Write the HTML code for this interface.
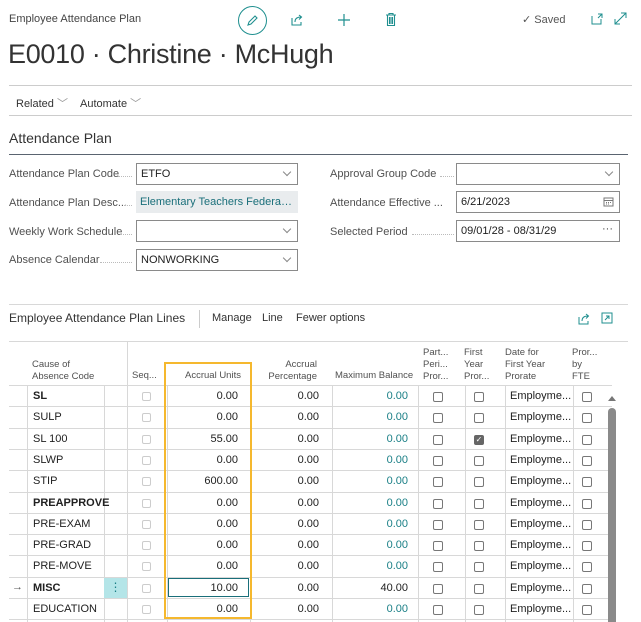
<!DOCTYPE html>
<html><head><meta charset="utf-8"><style>
*{box-sizing:border-box;margin:0;padding:0}
body{width:641px;height:622px;overflow:hidden;background:#fff;font-family:"Liberation Sans",sans-serif;color:#212121;position:relative;font-size:11px}
.a{position:absolute;white-space:nowrap}
.lbl{color:#505050;font-size:11px}
.dots{position:absolute;border-bottom:1px dotted #bbb;height:1px}
.inp{position:absolute;border:1px solid #8a8a8a;background:#fff;height:22px;font-size:11px;padding:4px 4px;color:#212121;white-space:nowrap;overflow:hidden;text-overflow:ellipsis}
.chev{position:absolute;right:7px;top:5px;width:6px;height:6px;border-right:1px solid #888;border-bottom:1px solid #888;transform:rotate(45deg)}
.hl{position:absolute;height:1px;background:#d8d8d8}
.vl{position:absolute;width:1px;background:#d8d8d8}
.cb{position:absolute;width:10px;height:10px;border:1px solid #777;border-radius:2px}
.cbd{position:absolute;width:9px;height:9px;border:1px solid #ccc;border-radius:2px}
.num{position:absolute;text-align:right;font-size:11px}
.th{position:absolute;font-size:9.5px;color:#505050;line-height:12px}
</style></head><body>
<div class="a" style="left:9px;top:13px;font-size:11px;color:#444">Employee Attendance Plan</div>
<div class="a" style="left:238px;top:6px;width:29px;height:29px;border:1px solid #1f8f8f;border-radius:50%"></div>
<svg class="a" style="left:245px;top:13px" width="15" height="15" viewBox="0 0 15 15"><path d="M3 12 L4 9 L10 3 L12 5 L6 11 Z" fill="none" stroke="#1f8f8f" stroke-width="1.1"/></svg>
<svg class="a" style="left:290px;top:13px" width="14" height="14" viewBox="0 0 14 14"><path d="M2 5 V12 H11 V9 M5 9 C5 5 8 4 11 4 M9 2 L11.5 4 L9 6.5" fill="none" stroke="#1f8f8f" stroke-width="1.1"/></svg>
<svg class="a" style="left:337px;top:13px" width="14" height="14"><path d="M7 1V13M1 7H13" stroke="#1f8f8f" stroke-width="1.2"/></svg>
<svg class="a" style="left:384px;top:12px" width="14" height="15"><path d="M2 3H12M5 3V1.5H9V3M3.5 3V13.5H10.5V3M5.5 5V12M7 5V12M8.5 5V12" fill="none" stroke="#1f8f8f" stroke-width="1.1"/></svg>
<div class="a" style="left:522px;top:13px;color:#555;font-size:11px">✓ Saved</div>
<svg class="a" style="left:591px;top:13px" width="12" height="12"><path d="M1 3V11H10V6M7 1H11V5M11 1L7 5" fill="none" stroke="#1f8f8f" stroke-width="1"/></svg>
<svg class="a" style="left:614px;top:12px" width="13" height="13"><path d="M1 12L12 1M7 1H12V6M1 7V12H6" fill="none" stroke="#1f8f8f" stroke-width="1"/></svg>
<div class="a" style="left:8px;top:39px;font-size:27px;color:#333;letter-spacing:-0.3px">E0010 · Christine · McHugh</div>
<div class="hl" style="left:9px;top:85px;width:623px;background:#ccc"></div>
<div class="a" style="left:16px;top:95px;font-size:11px;color:#333">Related <span style="color:#999">﹀</span></div>
<div class="a" style="left:80px;top:95px;font-size:11px;color:#333">Automate <span style="color:#999">﹀</span></div>
<div class="hl" style="left:9px;top:115px;width:623px;background:#ccc"></div>
<div class="a" style="left:9px;top:130px;font-size:14px;color:#333">Attendance Plan</div>
<div class="hl" style="left:9px;top:154px;width:619px;background:#5a6470"></div>

<div class="a lbl" style="left:9px;top:168px">Attendance Plan Code</div><div class="dots" style="left:118px;width:14px;top:176px"></div>
<div class="inp" style="left:136px;top:163px;width:162px">ETFO<div class="chev"></div></div>
<div class="a lbl" style="left:9px;top:197px">Attendance Plan Desc...</div><div class="dots" style="left:124px;width:8px;top:205px"></div>
<div class="inp" style="left:136px;top:191px;width:162px;border:none;background:#e9ecee;color:#1a6f7a;padding-top:5px">Elementary Teachers Federation...</div>
<div class="a lbl" style="left:9px;top:226px">Weekly Work Schedule</div><div class="dots" style="left:120px;width:12px;top:234px"></div>
<div class="inp" style="left:136px;top:220px;width:162px"><div class="chev"></div></div>
<div class="a lbl" style="left:9px;top:254px">Absence Calendar</div><div class="dots" style="left:100px;width:32px;top:262px"></div>
<div class="inp" style="left:136px;top:249px;width:162px">NONWORKING<div class="chev"></div></div>

<div class="a lbl" style="left:330px;top:168px">Approval Group Code</div><div class="dots" style="left:440px;width:14px;top:176px"></div>
<div class="inp" style="left:456px;top:163px;width:164px"><div class="chev"></div></div>
<div class="a lbl" style="left:330px;top:197px">Attendance Effective ...</div>
<div class="inp" style="left:456px;top:191px;width:164px">6/21/2023<svg style="position:absolute;right:5px;top:4px" width="11" height="11"><rect x="1" y="2" width="9" height="8" fill="none" stroke="#777"/><path d="M1 4.5H10M3 6.5h1M5 6.5h1M7 6.5h1M3 8h1M5 8h1" stroke="#777"/></svg></div>
<div class="a lbl" style="left:330px;top:226px">Selected Period</div><div class="dots" style="left:412px;width:42px;top:234px"></div>
<div class="inp" style="left:456px;top:220px;width:164px">09/01/28 - 08/31/29<span style="position:absolute;right:6px;top:2px;color:#444">···</span></div>

<div class="hl" style="left:9px;top:304px;width:619px"></div>
<div class="a" style="left:9px;top:311px;font-size:12px;color:#333">Employee Attendance Plan Lines</div>
<div class="vl" style="left:199px;top:310px;height:18px;background:#ccc"></div>
<div class="a" style="left:212px;top:312px;font-size:11px;color:#333">Manage</div>
<div class="a" style="left:262px;top:312px;font-size:11px;color:#333">Line</div>
<div class="a" style="left:296px;top:312px;font-size:11px;color:#333">Fewer options</div>
<svg class="a" style="left:577px;top:312px" width="13" height="13"><path d="M2 5V12H11V9M5 9C5 5 8 4 11 4M9 2L11.5 4L9 6.5" fill="none" stroke="#1f8f8f" stroke-width="1"/></svg>
<svg class="a" style="left:601px;top:312px" width="12" height="12"><path d="M1 1H11V11H1Z M5 4H8V7M8 4L4 8" fill="none" stroke="#1f8f8f" stroke-width="1"/></svg>
<div class="hl" style="left:9px;top:341px;width:619px"></div>

<div class="th" style="left:32px;top:359px">Cause of<br>Absence Code</div>
<div class="th" style="left:132px;top:370px">Seq...</div>
<div class="th" style="left:185px;top:370px">Accrual Units</div>
<div class="th" style="left:260px;top:359px;width:57px;text-align:right">Accrual<br>Percentage</div>
<div class="th" style="left:335px;top:370px">Maximum Balance</div>
<div class="th" style="left:423px;top:347px">Part...<br>Peri...<br>Pror...</div>
<div class="th" style="left:464px;top:347px">First<br>Year<br>Pror...</div>
<div class="th" style="left:505px;top:347px">Date for<br>First Year<br>Prorate</div>
<div class="th" style="left:572px;top:347px">Pror...<br>by<br>FTE</div>
<div class="vl" style="left:127px;top:341px;height:281px"></div>

<div id="rows"></div>
<script>
var rows=[["SL",1,"0.00","0.00",0],["SULP",0,"0.00","0.00",0],["SL 100",0,"55.00","0.00",1],["SLWP",0,"0.00","0.00",0],["STIP",0,"600.00","0.00",0],["PREAPPROVE",1,"0.00","0.00",0],["PRE-EXAM",0,"0.00","0.00",0],["PRE-GRAD",0,"0.00","0.00",0],["PRE-MOVE",0,"0.00","0.00",0],["MISC",1,"10.00","40.00",0],["EDUCATION",0,"0.00","0.00",0]];
var h="";var top0=385,rh=21.3;
h+='<div class="hl" style="left:9px;top:385px;width:603px"></div>';
[27,104,167,250,332,418,465,505,573].forEach(function(x){h+='<div class="vl" style="left:'+x+'px;top:385px;height:237px"></div>'});
rows.forEach(function(r,i){var t=Math.round(top0+rh*i);var b=Math.round(top0+rh*(i+1));
var c=(t+b)/2+1;
h+='<div class="hl" style="left:9px;top:'+b+'px;width:603px"></div>';
h+='<div class="a" style="left:33px;top:'+(c-7)+'px;font-size:11px;'+(r[1]?'font-weight:bold;':'')+'">'+r[0]+'</div>';
h+='<div class="cbd" style="left:142px;top:'+(c-5)+'px"></div>';
h+='<div class="num" style="left:170px;width:68px;top:'+(c-7)+'px">'+r[2]+'</div>';
h+='<div class="num" style="left:252px;width:67px;top:'+(c-7)+'px">0.00</div>';
h+='<div class="num" style="left:334px;width:74px;top:'+(c-7)+'px;color:'+(r[3]=="40.00"?"#212121":"#1a7f86")+'">'+r[3]+'</div>';
h+='<div class="cb" style="left:433px;top:'+(c-5)+'px"></div>';
h+=r[4]?'<div class="cb" style="left:474px;top:'+(c-5)+'px;background:#666;border-color:#666;color:#fff;font-size:8px;line-height:8px;text-align:center">✓</div>':'<div class="cb" style="left:474px;top:'+(c-5)+'px"></div>';
h+='<div class="a" style="left:510px;top:'+(c-7)+'px;font-size:11px">Employme...</div>';
h+='<div class="cb" style="left:582px;top:'+(c-5)+'px"></div>';
if(r[0]=="MISC"){h+='<div class="a" style="left:104px;top:'+(t+1)+'px;width:23px;height:'+(b-t-1)+'px;background:#b4e5e8;color:#1a7f86;text-align:center;font-size:12px;line-height:18px">⋮</div>';
h+='<div class="a" style="left:12px;top:'+(c-8)+'px;color:#555">→</div>';
h+='<div class="a" style="left:168px;top:'+(t+1)+'px;width:81px;height:'+(b-t-2)+'px;border:1px solid #1a6f7a"></div>';}
});
document.getElementById("rows").innerHTML=h;
</script>
<div class="a" style="left:164px;top:362px;width:88px;height:257px;border:2px solid #f5b82e"></div>
<div class="a" style="left:608px;top:396px;width:0;height:0;border-left:4px solid transparent;border-right:4px solid transparent;border-bottom:5px solid #777"></div>
<div class="a" style="left:608px;top:408px;width:8px;height:214px;background:#8a8a8a;border-radius:4px 4px 0 0"></div>
</body></html>
